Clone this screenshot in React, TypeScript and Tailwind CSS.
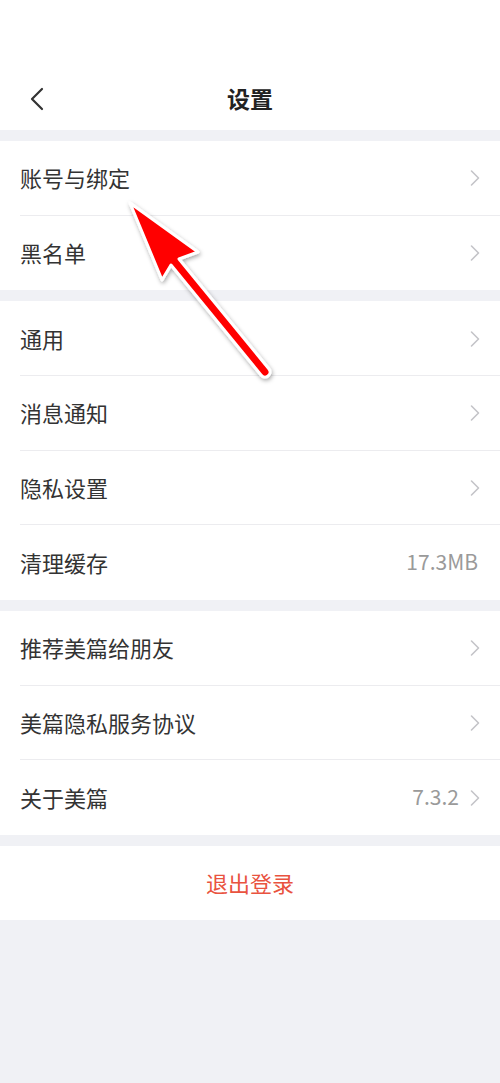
import React from "react";

const Chevron = () => (
  <svg width="12" height="18" viewBox="0 0 12 18" className="shrink-0">
    <path d="M2.5 2 L9.5 9 L2.5 16" fill="none" stroke="#c4c4c8" strokeWidth="1.6" strokeLinecap="round" strokeLinejoin="round" />
  </svg>
);

type Item = { label: string; value?: string; chevron?: boolean; divider?: boolean };

const Row = ({ label, value, chevron = true, divider }: Item) => (
  <div className={`flex h-[74.67px] items-center pl-[20px] relative ${chevron ? "pr-[19px]" : "pr-[22px]"}`}>
    <span className="flex-1 text-[22px] leading-none text-[#333333] -translate-y-[1px]">{label}</span>
    {value && (
      <span className={`text-[21px] leading-none text-[#9a9a9a] -translate-y-[1px] ${chevron ? "mr-[10px]" : ""}`}>
        {value}
      </span>
    )}
    {chevron && <Chevron />}
    {divider && <div className="absolute bottom-0 left-[20px] right-0 h-px bg-[#ececef]" />}
  </div>
);

const Group = ({ items }: { items: Item[] }) => (
  <div className="bg-white">
    {items.map((it, i) => (
      <Row key={it.label} {...it} divider={i < items.length - 1} />
    ))}
  </div>
);

export default function App() {
  return (
    <div
      className="relative w-[500px] h-[1083px] bg-[#f0f1f5] overflow-hidden"
      style={{ fontFamily: '"Noto Sans CJK SC", "Noto Sans", sans-serif' }}
    >
      <div className="bg-white h-[130px] pt-[60px]">
        <div className="relative h-[78px] flex items-center justify-center">
          <svg width="16" height="24" viewBox="0 0 16 24" className="absolute left-[29px] top-[27px]">
            <path d="M13 2 L3 12 L13 22" fill="none" stroke="#333" strokeWidth="2.2" strokeLinecap="round" strokeLinejoin="round" />
          </svg>
          <span className="text-[23px] leading-none font-bold text-[#222] -translate-y-[1px]">设置</span>
        </div>
      </div>
      <div className="flex flex-col gap-[11px] pt-[11px]">
        <Group items={[{ label: "账号与绑定" }, { label: "黑名单" }]} />
        <Group
          items={[
            { label: "通用" },
            { label: "消息通知" },
            { label: "隐私设置" },
            { label: "清理缓存", value: "17.3MB", chevron: false },
          ]}
        />
        <Group
          items={[
            { label: "推荐美篇给朋友" },
            { label: "美篇隐私服务协议" },
            { label: "关于美篇", value: "7.3.2" },
          ]}
        />
        <div className="bg-white h-[74px] flex items-center justify-center">
          <span className="text-[22px] leading-none text-[#e9533f] -translate-y-[1px]">退出登录</span>
        </div>
      </div>

      <svg className="absolute left-0 top-0 pointer-events-none" width="500" height="1083" viewBox="0 0 500 1083">
        <defs>
          <filter id="sh" x="-20%" y="-20%" width="140%" height="140%">
            <feDropShadow dx="1" dy="2" stdDeviation="2" floodColor="#000" floodOpacity="0.35" />
          </filter>
        </defs>
        <path
          d="M130 203 L198 252 L179 259 L269 369 A5 5 0 0 1 261 375 L171 265 L162 280 Z"
          fill="#ff0000"
          stroke="#ffffff"
          strokeWidth="3"
          strokeLinejoin="round"
          filter="url(#sh)"
        />
      </svg>
    </div>
  );
}
